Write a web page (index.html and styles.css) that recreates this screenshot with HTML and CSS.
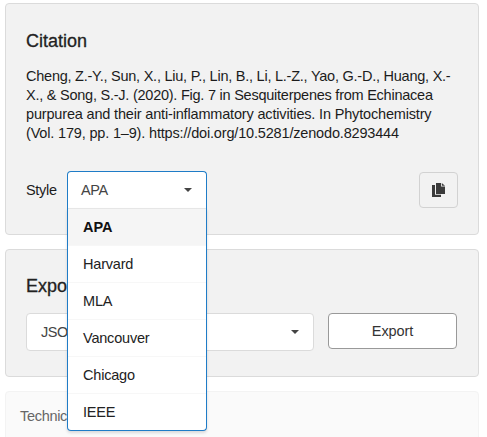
FILE: index.html
```html
<!DOCTYPE html>
<html lang="en">
<head>
<meta charset="utf-8">
<title>Citation</title>
<link rel="stylesheet" href="styles.css">
</head>
<body>
<main class="sidebar">
  <section class="card citation">
    <h2 class="title">Citation</h2>
    <p class="reference">
      <span class="line l1">Cheng, Z.-Y., Sun, X., Liu, P., Lin, B., Li, L.-Z., Yao, G.-D., Huang, X.-</span>
      <span class="line l2">X., &amp; Song, S.-J. (2020). Fig. 7 in Sesquiterpenes from Echinacea</span>
      <span class="line l3">purpurea and their anti-inflammatory activities. In Phytochemistry</span>
      <span class="line l4">(Vol. 179, pp. 1–9). https://doi.org/10.5281/zenodo.8293444</span>
    </p>
    <div class="row">
      <span class="label">Style</span>
      <div class="select open">
        <span class="value">APA</span>
        <svg class="caret" viewBox="0 0 8 4"><path d="M0 0h8L4 4z"/></svg>
        <ul class="menu">
          <li class="active">APA</li>
          <li>Harvard</li>
          <li>MLA</li>
          <li>Vancouver</li>
          <li>Chicago</li>
          <li>IEEE</li>
        </ul>
      </div>
      <button class="copy" aria-label="Copy">
        <svg viewBox="0 0 13 14"><path d="M0 2h3v9.8h6V14H0z"/><path d="M4 0h5v3.4h4V11H4z"/><path d="M9.8 0L13 2.7H9.8z"/></svg>
      </button>
    </div>
  </section>
  <section class="card export">
    <h2 class="title">Export</h2>
    <div class="row">
      <div class="select format">
        <span class="value">JSON</span>
        <svg class="caret" viewBox="0 0 8 4"><path d="M0 0h8L4 4z"/></svg>
      </div>
      <button class="submit">Export</button>
    </div>
  </section>
  <section class="card technical">Technical</section>
</main>
</body>
</html>
```
FILE: styles.css
```css
* { box-sizing: border-box; }
html, body { height: 100%; }
body {
  margin: 0;
  overflow: hidden;
  background: #fff;
  color: #1c1c1c;
  font: 14.5px/19px "Liberation Sans", Arial, sans-serif;
}
.sidebar {
  width: 474px;
  margin-left: 5px;
  padding-top: 3px;
  display: flex;
  flex-direction: column;
  gap: 14px;
}
.card {
  border: 1px solid #dbdbdb;
  border-radius: 4px;
  background: #f2f2f2;
  padding: 0 20px;
}
.citation { height: 232px; }
.export { height: 128px; }
.technical {
  height: 60px;
  padding: 15px 14px;
  background: #fafafa;
  border-color: #f3f3f3;
  color: #666;
  letter-spacing: -0.3px;
}
.title {
  margin: 26px 0 0;
  font-size: 18px;
  line-height: 22px;
  font-weight: 400;
  -webkit-text-stroke: 0.3px #222;
  color: #222;
}
.reference { margin: 15px 0 0; }
.line { display: block; width: max-content; white-space: nowrap; }
.l1, .l2 { letter-spacing: -0.24px; }
.l3, .l4 { letter-spacing: -0.17px; }
.row { display: flex; }
.citation .row { margin-top: 28px; }
.label { width: 41px; padding-top: 10px; letter-spacing: -0.3px; }
.select {
  position: relative;
  display: flex;
  align-items: center;
  justify-content: space-between;
  height: 38px;
  padding: 0 14px;
  background: #fff;
  border: 1px solid #dbdbdb;
  border-radius: 4px;
  color: #444;
}
.value { letter-spacing: -0.4px; }
.caret { width: 8px; height: 4px; fill: #444; }
.open {
  width: 140px;
  padding: 0 14px 0 13px;
  border-color: #1f7cc7;
  border-bottom-color: #e6e6e6;
  border-radius: 4px 4px 0 0;
}
.menu {
  position: absolute;
  z-index: 2;
  top: 36px;
  left: -1px;
  width: 140px;
  margin: 0;
  padding: 0;
  list-style: none;
  background: #fff;
  border: 1px solid #1f7cc7;
  border-top: 0;
  border-radius: 0 0 4px 4px;
  box-shadow: 0 2px 3px rgba(34, 36, 38, .15);
  color: #222;
}
.menu li {
  height: 37px;
  padding: 9px 15px;
  border-top: 1px solid #f7f7f7;
  letter-spacing: -0.2px;
}
.menu .active {
  background: #f5f5f5;
  border-top-color: #e6e6e6;
  font-weight: 700;
  letter-spacing: 0;
  color: #111;
}
.copy {
  width: 39px;
  height: 36px;
  margin: 1px 0 0 auto;
  padding: 0;
  display: grid;
  place-items: center;
  background: #f2f2f2;
  border: 1px solid #d2d2d2;
  border-radius: 4px;
}
.copy svg { width: 13px; height: 14px; fill: #3b3b3b; }
.export .title { margin-top: 25px; }
.export .row { margin-top: 16px; gap: 14px; }
.format { width: 288px; }
.submit {
  width: 129px;
  height: 36px;
  padding: 0;
  background: #fff;
  border: 1px solid #999;
  border-radius: 4px;
  font: inherit;
  letter-spacing: -0.1px;
  color: #333;
}
```
